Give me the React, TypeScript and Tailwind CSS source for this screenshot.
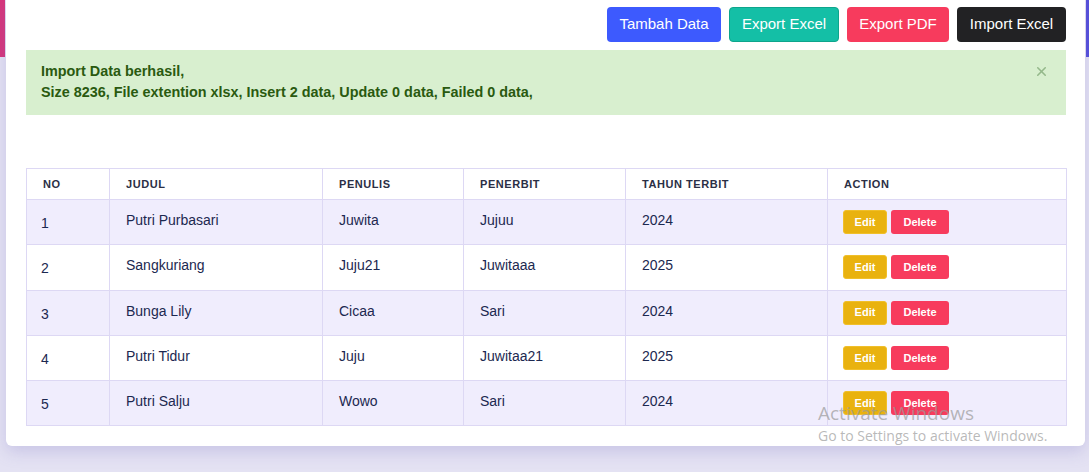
import { X } from "lucide-react";

interface Book {
  no: number;
  judul: string;
  penulis: string;
  penerbit: string;
  tahun: string;
}

const BOOKS: Book[] = [
  { no: 1, judul: "Putri Purbasari", penulis: "Juwita", penerbit: "Jujuu", tahun: "2024" },
  { no: 2, judul: "Sangkuriang", penulis: "Juju21", penerbit: "Juwitaaa", tahun: "2025" },
  { no: 3, judul: "Bunga Lily", penulis: "Cicaa", penerbit: "Sari", tahun: "2024" },
  { no: 4, judul: "Putri Tidur", penulis: "Juju", penerbit: "Juwitaa21", tahun: "2025" },
  { no: 5, judul: "Putri Salju", penulis: "Wowo", penerbit: "Sari", tahun: "2024" },
];

const HEADERS = [
  { label: "NO", w: "w-[83px]" },
  { label: "JUDUL", w: "w-[213px]" },
  { label: "PENULIS", w: "w-[141px]" },
  { label: "PENERBIT", w: "w-[162px]" },
  { label: "TAHUN TERBIT", w: "w-[202px]" },
  { label: "ACTION", w: "w-[239px]" },
];

function Toolbar() {
  return (
    <div className="flex justify-end gap-2 pt-[7px]">
      <button className="h-[35px] w-[114px] rounded bg-[#3d5afe] text-[15px] text-white">Tambah Data</button>
      <button className="h-[35px] w-[110px] rounded border border-[#0ea58c] bg-[#14bfa6] text-[15px] text-white">
        Export Excel
      </button>
      <button className="h-[35px] w-[102px] rounded bg-[#f73b5d] text-[15px] text-white">Export PDF</button>
      <button className="h-[35px] w-[109px] rounded bg-[#222224] text-[15px] text-white">Import Excel</button>
    </div>
  );
}

function Alert() {
  return (
    <div className="mt-2 flex h-[65px] items-start justify-between bg-[#d8efcf] pl-[15px] pr-[17px] pt-[11px]">
      <div className="text-[14.4px] font-bold leading-[21px] text-[#2a5a10]">
        <p>Import Data berhasil,</p>
        <p>Size 8236, File extention xlsx, Insert 2 data, Update 0 data, Failed 0 data,</p>
      </div>
      <X size={15} strokeWidth={2.5} className="mt-[3px] text-[#94b88a]" />
    </div>
  );
}

function BookTable() {
  return (
    <table className="mt-[53px] w-[1040px] table-fixed border-collapse text-left">
      <thead>
        <tr className="h-[31px] bg-white">
          {HEADERS.map((h) => (
            <th
              key={h.label}
              className={`${h.w} border border-[#ddd8f4] px-4 text-[11px] font-bold tracking-[0.05em] text-[#2b2f45]`}
            >
              {h.label}
            </th>
          ))}
        </tr>
      </thead>
      <tbody>
        {BOOKS.map((b) => (
          <tr key={b.no} className={`h-[45.3px] ${b.no % 2 ? "bg-[#f0edfd]" : "bg-white"}`}>
            <td className="border border-[#ddd8f4] px-[14px] pt-[3px] text-[14px] text-[#1c2850]">{b.no}</td>
            <td className="border border-[#ddd8f4] px-4 pb-[3px] text-[14px] text-[#1c2850]">{b.judul}</td>
            <td className="border border-[#ddd8f4] px-4 pb-[3px] text-[14px] text-[#1c2850]">{b.penulis}</td>
            <td className="border border-[#ddd8f4] px-4 pb-[3px] text-[14px] text-[#1c2850]">{b.penerbit}</td>
            <td className="border border-[#ddd8f4] px-4 pb-[3px] text-[14px] text-[#1c2850]">{b.tahun}</td>
            <td className="border border-[#ddd8f4] pl-[15px] pr-4">
              <div className="flex gap-1">
                <button className="h-6 w-11 rounded-[3px] border border-[#f0bf2a] bg-[#e9b20f] text-[11px] font-bold text-white">
                  Edit
                </button>
                <button className="h-6 w-[58px] rounded-[3px] bg-[#f73b5d] text-[11px] font-bold text-white">Delete</button>
              </div>
            </td>
          </tr>
        ))}
      </tbody>
    </table>
  );
}

export default function App() {
  return (
    <div className="relative flex h-[472px] w-[1089px] overflow-hidden bg-[#e4e2f3] font-['Liberation_Sans',Arial,sans-serif]">
      <div className="h-[57px] w-[5px] shrink-0 bg-[#d6357b]" />
      <div className="ml-px h-[446px] w-[1079px] shrink-0 rounded-b-md bg-white pl-5 pr-[19px] shadow-[0_6px_16px_rgba(120,110,190,0.25)]">
        <Toolbar />
        <Alert />
        <BookTable />
      </div>
      <div className="ml-auto h-[57px] w-[3px] shrink-0 bg-[#5650d8]" />

      <div className="pointer-events-none absolute left-[818px] top-[400px] font-['Open_Sans',sans-serif] text-[#9a9a9a]/70">
        <p className="text-[19px] leading-[26px]">Activate Windows</p>
        <p className="text-[14px] leading-[20px]">Go to Settings to activate Windows.</p>
      </div>
    </div>
  );
}
